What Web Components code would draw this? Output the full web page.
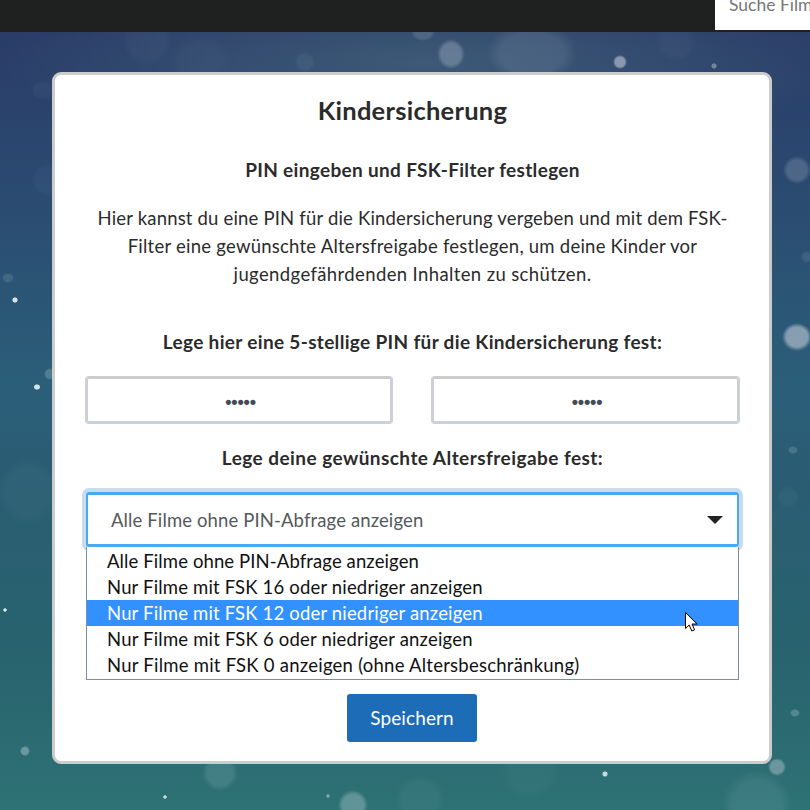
<!doctype html>
<html lang="de"><head><meta charset="utf-8"><title>Kindersicherung</title>
<style>html,body{margin:0;padding:0;height:810px;overflow:hidden;background:#2a5a6c}
body{font-family:Lato,"Noto Sans",sans-serif}</style></head>
<body>
<template id="t-top"><style>
:host{display:flex;justify-content:flex-end;height:32px;background:#1f2120;flex:none;position:relative;z-index:1}
.s{width:95px;height:30px;background:#fff;overflow:hidden;box-sizing:border-box;padding-left:14px;font:17.5px/10px Lato,sans-serif;color:#767676;white-space:nowrap}
</style><div class="s"><slot></slot></div></template>

<template id="t-bg"><style>
:host{display:flex;justify-content:center;align-items:flex-start;height:778px;padding:40px 0 0 14px;box-sizing:border-box}
</style><slot></slot></template>

<template id="t-card"><style>
:host{display:block;width:720px;height:692px;box-sizing:border-box;background:#fff;border:3px solid #ccc;border-radius:9px;padding:0 29px 0 30px;color:#2b2b2b;text-align:center;font:18.5px/28px Lato,sans-serif;letter-spacing:.18px}
h1{font-size:25.5px;line-height:32px;font-weight:700;letter-spacing:.25px;margin:19px 0 30px}
</style><h1><slot name="title"></slot></h1><slot></slot></template>

<template id="t-text"><style>
:host{display:block;margin:0}
:host([bold]){font-weight:700;font-size:19px;letter-spacing:.33px}
</style><slot></slot></template>

<template id="t-pin"><style>
:host{display:block;flex:1;height:48px;box-sizing:border-box;border:3px solid;border-color:#ccc #ccd0d6 #c8d0dc;border-radius:4px;padding-left:3px;text-align:center;font:700 18px/46px "Liberation Sans",sans-serif;letter-spacing:-.2px;color:#444b55}
</style><slot></slot></template>

<template id="t-row"><style>
:host{display:flex;gap:38px;margin:20px 0 20px}
</style><slot></slot></template>

<template id="t-select"><style>
:host{display:block;position:relative;height:55px;margin:20px 1px 0 1px;box-sizing:border-box;border:3px solid #4aa8f2;border-left-width:2px;border-right-width:2px;border-radius:3px;box-shadow:0 0 0 4px #c8dcee;text-align:left;color:#55595c;font-size:18.5px;letter-spacing:.12px;line-height:51px;padding-left:23px}
.arrow{position:absolute;right:14px;top:21px;width:16px;height:8px}
.list{position:absolute;left:-2px;right:-2px;top:52px;box-sizing:border-box;height:133px;background:#fff;border:1px solid #7a8cb0;border-top:none;color:#111;font-size:18.5px;letter-spacing:.17px;line-height:26px;padding-top:1px;z-index:2}
.i{padding-left:20px;white-space:nowrap}
.hi{background:#3390ff;color:#fff}
.cur{position:absolute;left:598px;top:65px;width:13px;height:20px;z-index:3}
</style><slot name="value"></slot>
<svg class="arrow" viewBox="0 0 16 8"><path d="M0 0H16L8 8Z" fill="#222"/></svg>
<div class="list"><div class="i"><slot name="o1"></slot></div><div class="i"><slot name="o2"></slot></div><div class="i hi"><slot name="o3"></slot></div><div class="i"><slot name="o4"></slot></div><div class="i"><slot name="o5"></slot></div>
<svg class="cur" viewBox="0 0 13 20"><path d="M.5.5V16.5L4.2 13 6.8 19 9.6 17.8 7 12H12.2Z" fill="#fff" stroke="#000"/></svg></div></template>

<template id="t-btn"><style>
:host{display:block;width:130px;height:48px;background:#1c6cb8;border-radius:3px;color:#fff;font-size:19px;letter-spacing:.1px;line-height:48px;text-align:center}
</style><slot></slot></template>

<top-bar>Suche Filme</top-bar>
<bokeh-bg>
<panel-card>
<span slot="title">Kindersicherung</span>
<text-line bold>PIN eingeben und FSK-Filter festlegen</text-line>
<text-line style="margin:20px 0 40px">Hier kannst du eine PIN für die Kindersicherung vergeben und mit dem FSK-<br><span style="letter-spacing:.24px">Filter eine gewünschte Altersfreigabe festlegen, um deine Kinder vor</span><br><span style="letter-spacing:.38px">jugendgefährdenden Inhalten zu schützen.</span></text-line>
<text-line bold>Lege hier eine 5-stellige PIN für die Kindersicherung fest:</text-line>
<pin-row><pin-box style="flex:0 0 308px">•••••</pin-box><pin-box>•••••</pin-box></pin-row>
<text-line bold style="letter-spacing:.45px">Lege deine gewünschte Altersfreigabe fest:</text-line>
<age-select>
<span slot="value">Alle Filme ohne PIN-Abfrage anzeigen</span>
<span slot="o1" style="letter-spacing:.11px">Alle Filme ohne PIN-Abfrage anzeigen</span>
<span slot="o2">Nur Filme mit FSK 16 oder niedriger anzeigen</span>
<span slot="o3">Nur Filme mit FSK 12 oder niedriger anzeigen</span>
<span slot="o4" style="letter-spacing:.19px">Nur Filme mit FSK 6 oder niedriger anzeigen</span>
<span slot="o5" style="letter-spacing:.24px">Nur Filme mit FSK 0 anzeigen (ohne Altersbeschränkung)</span>
</age-select>
<save-button style="margin:147px 0 0 262px">Speichern</save-button>
</panel-card>
</bokeh-bg>
<script>
const spots=[ // x,y,rx,ry,colour,alpha (page coordinates)
[451,54,14,15,'190,200,215',.32],[532,53,45,30,'170,185,205',.15],[620,62,7,7,'220,225,235',.5],[714,66,3,3,'210,220,230',.4],[423,33,12,8,'170,185,205',.2],[305,62,10,10,'170,190,205',.08],[147,40,25,25,'150,170,195',.05],[676,42,20,20,'150,170,195',.05],[200,60,30,25,'150,180,195',.04],
[15,300,3,3,'230,245,245',.9],[37,387,3.5,3,'230,240,245',.9],[5,610,2,2,'225,245,245',.9],[8,278,6,5,'170,195,205',.18],[50,374,6,6,'170,200,205',.3],[28,492,30,33,'140,180,190',.06],[47,180,16,16,'100,130,170',.1],[43,90,12,10,'130,150,180',.07],[25,751,5,5,'185,205,210',.45],
[797,170,14,14,'180,190,205',.25],[807,257,6,6,'170,190,205',.15],[797,337,15,14,'210,215,225',.55],[793,450,5,4,'170,200,210',.22],[788,497,11,11,'150,190,200',.06],[795,713,5,4,'185,205,215',.3],[777,767,9,9,'170,190,205',.5],[757,805,35,35,'140,190,195',.14],
[605,774,3,3,'225,235,240',.85],[353,805,15,15,'170,200,205',.4],[328,796,2,2,'200,220,225',.5],[220,773,18,18,'150,190,195',.2],[165,797,2,2,'225,245,245',.8],[420,800,25,25,'140,190,195',.07],[530,770,30,30,'140,190,195',.05]];
const layers=spots.map(([x,y,a,b,c,o])=>`radial-gradient(ellipse ${a}px ${b}px at ${x}px ${y-32}px,rgba(${c},${o}) 70%,rgba(${c},0) 100%)`);
layers.push('radial-gradient(ellipse 430px 90px at 430px 30px,rgba(90,130,140,.4),rgba(90,130,140,0) 100%)');
layers.push('linear-gradient(180deg,#2a3c67 0%,#2b4a70 20%,#2b5e79 45%,#2a5d72 60%,#28636e 80%,#2e7275 100%)');
const defs=[['top-bar','t-top'],['bokeh-bg','t-bg'],['panel-card','t-card'],['text-line','t-text'],['pin-box','t-pin'],['pin-row','t-row'],['age-select','t-select'],['save-button','t-btn']];
for (const [tag,id] of defs) {
  customElements.define(tag, class extends HTMLElement {
    constructor(){super();this.attachShadow({mode:'open'}).appendChild(document.getElementById(id).content.cloneNode(true));}
    connectedCallback(){ if(tag==='bokeh-bg') this.style.background=layers.join(','); }
  });
}
</script>
</body></html>
